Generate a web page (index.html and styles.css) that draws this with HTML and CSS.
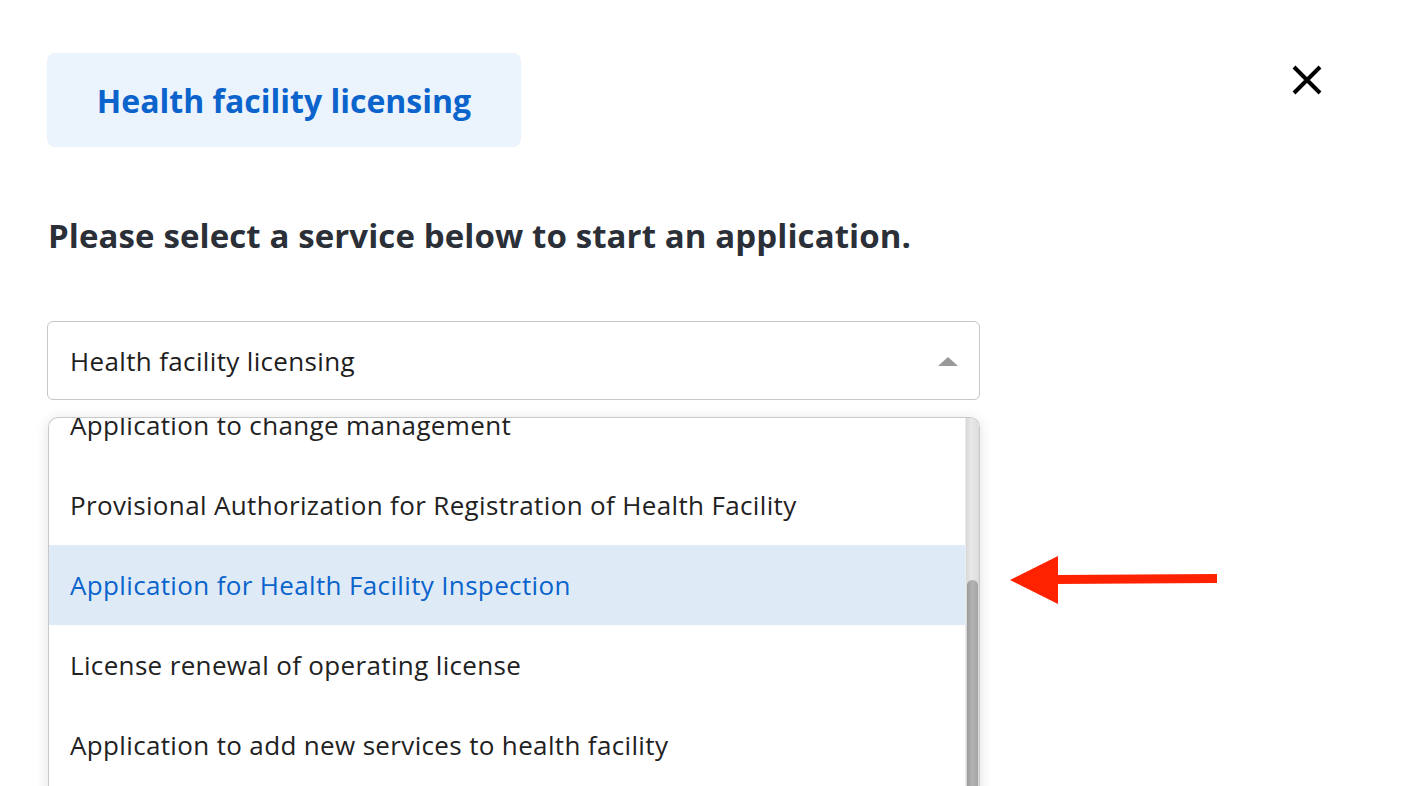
FILE: index.html
```html
<!DOCTYPE html>
<html lang="en">
<head>
  <meta charset="UTF-8" />
  <meta name="viewport" content="width=device-width, initial-scale=1.0" />
  <title>Select a service</title>
  <link rel="stylesheet" href="styles.css">
</head>
<body>
  <div class="page">
    <header class="top">
      <div class="badge">Health facility licensing</div>
      <button class="close" aria-label="Close">
        <svg width="30" height="30" viewBox="0 0 30 30">
          <path d="M2 2 L28 28 M28 2 L2 28" stroke="#000" stroke-width="4" fill="none"/>
        </svg>
      </button>
    </header>

    <h2 class="prompt">Please select a service below to start an application.</h2>

    <div class="picker">
      <div class="select">
        <span>Health facility licensing</span>
        <span class="caret"></span>
      </div>

      <div class="menu">
        <ul class="options">
          <li class="option first">Application to change management</li>
          <li class="option">Provisional Authorization for Registration of Health Facility</li>
          <li class="option active">Application for Health Facility Inspection</li>
          <li class="option">License renewal of operating license</li>
          <li class="option">Application to add new services to health facility</li>
        </ul>
        <div class="scrollbar"><div class="thumb"></div></div>
      </div>
    </div>
  </div>

  <svg class="pointer" width="210" height="50" viewBox="0 0 210 50">
    <polygon points="0,24 48,0 48,48" fill="#ff2200"/>
    <polygon points="46,19 207,18 207,27 46,28" fill="#ff2200"/>
  </svg>
</body>
</html>
```

FILE: styles.css
```css
body {
  margin: 0;
  font-family: 'Open Sans', 'Lato', sans-serif;
  background: #fff;
  color: #222;
  overflow: hidden;
  height: 786px;
}
.page {
  padding: 53px 0 0 47px;
  width: 1280px;
}
.top {
  display: flex;
  justify-content: space-between;
  align-items: flex-start;
}
.badge {
  width: 474px;
  height: 94px;
  box-sizing: border-box;
  background: #ebf3fd;
  border-radius: 8px;
  color: #0b63cc;
  font-size: 32px;
  font-weight: 700;
  display: flex;
  align-items: center;
  justify-content: center;
}
.close {
  background: none;
  border: none;
  padding: 0;
  margin: 12px 5px 0 0;
  cursor: pointer;
  line-height: 0;
}
.prompt {
  margin: 69px 0 0 1px;
  font-size: 33px;
  line-height: 40px;
  letter-spacing: 0.1px;
  font-weight: 700;
  color: #2b2f38;
}
.picker {
  margin-top: 65px;
  width: 933px;
}
.select {
  height: 79px;
  box-sizing: border-box;
  border: 1px solid #c6c6c6;
  border-radius: 6px;
  display: flex;
  align-items: center;
  justify-content: space-between;
  padding: 0 21px 0 22px;
  font-size: 26px;
  letter-spacing: 0.35px;
  color: #1e1e1e;
}
.caret {
  width: 0;
  height: 0;
  border-left: 10px solid transparent;
  border-right: 10px solid transparent;
  border-bottom: 9px solid #999;
  margin-top: 2px;
}
.menu {
  position: relative;
  margin: 17px 0 0 1px;
  height: 400px;
  border: 1px solid #c8c8c8;
  border-bottom: none;
  border-radius: 10px 10px 0 0;
  overflow: hidden;
  box-shadow: 0 2px 14px rgba(0, 0, 0, 0.12);
}
.options {
  list-style: none;
  margin: 0;
  padding: 0 13px 0 0;
}
.option {
  height: 80px;
  display: flex;
  align-items: center;
  padding-left: 21px;
  font-size: 26px;
  letter-spacing: 0.35px;
  color: #222;
}
.option.first {
  margin-top: -33px;
}
.option.active {
  background: #deebf7;
  color: #0b63cc;
}
.scrollbar {
  position: absolute;
  top: 0;
  right: 0;
  bottom: 0;
  width: 13px;
  background: linear-gradient(to right, #d8d8d8, #e8e8e8 40%, #dcdcdc);
  border-left: 1px solid #ececec;
}
.thumb {
  position: absolute;
  top: 162px;
  left: 1px;
  right: 1px;
  bottom: 0;
  border-radius: 6px 6px 0 0;
  background: linear-gradient(to right, #9c9c9c, #b4b4b4 50%, #a4a4a4);
}
.pointer {
  position: absolute;
  left: 1010px;
  top: 556px;
}
```
